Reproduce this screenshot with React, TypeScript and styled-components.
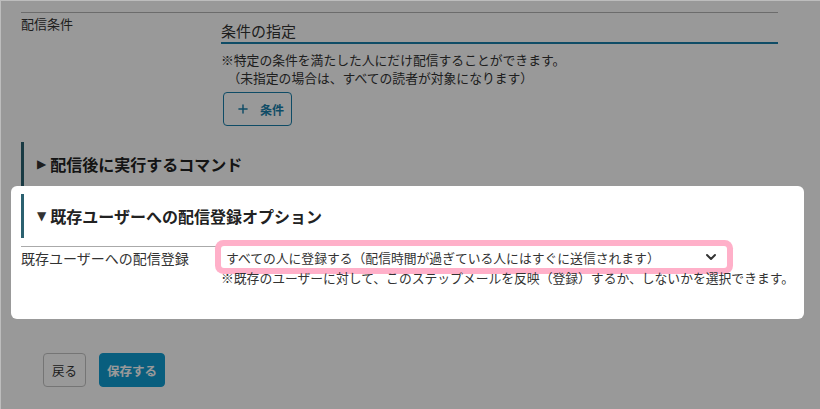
import React from 'react';
import styled, { createGlobalStyle } from 'styled-components';
import { ChevronDown, Plus } from 'lucide-react';

const GlobalStyle = createGlobalStyle`
  body {
    margin: 0;
    background: #ffffff;
    font-family: 'Noto Sans CJK JP', 'Noto Sans', sans-serif;
    color: #333333;
  }
`;

const Overlay = styled.div`
  position: fixed;
  inset: 0;
  background: rgba(0, 0, 0, 0.4);
  border-top: 1px solid rgba(255, 255, 255, 0.35);
  border-left: 1px solid rgba(255, 255, 255, 0.35);
  z-index: 1;
`;

const Page = styled.div`
  width: 820px;
  height: 409px;
  box-sizing: border-box;
  padding: 12px 42px 0 21px;
  overflow: hidden;
`;

const FormRow = styled.div<{ labelLine?: boolean }>`
  display: grid;
  grid-template-columns: 197px 1fr;
  column-gap: 3px;
  border-top: ${({ labelLine }) => (labelLine ? 'none' : '1px solid #b4b4b4')};
  margin-top: ${({ labelLine }) => (labelLine ? '8px' : '0')};
`;

const Label = styled.div<{ lined?: boolean }>`
  font-size: ${({ lined }) => (lined ? '14px' : '13px')};
  line-height: 18px;
  padding-top: 2px;
  border-top: ${({ lined }) => (lined ? '1px solid #aaaaaa' : 'none')};
`;

const Value = styled.div`
  padding-top: 8px;
  min-width: 0;
`;

const CondTitle = styled.div`
  font-size: 15px;
  line-height: 20px;
  padding-bottom: 1px;
  border-bottom: 2px solid #1a7fab;
  color: #333333;
`;

const Note = styled.div`
  font-size: 12.8px;
  line-height: 18px;
  white-space: nowrap;
`;

const NoteBlock = styled.div`
  margin-top: 7px;
`;

const AddButton = styled.button`
  display: flex;
  align-items: center;
  gap: 10px;
  margin: 5px 0 0 2px;
  width: 69px;
  height: 34px;
  padding: 0 0 0 12px;
  box-sizing: border-box;
  border: 1px solid #1a7fab;
  border-radius: 4px;
  background: #ffffff;
  color: #1a7fab;
  font-family: inherit;
  font-size: 12px;
  font-weight: 700;
`;

const SectionHeader = styled.div<{ gapTop: number }>`
  display: flex;
  align-items: center;
  gap: 4px;
  height: 44px;
  margin-top: ${({ gapTop }) => gapTop}px;
  padding-left: 13px;
  border-left: 3px solid #2b6170;
  font-size: 16px;
  font-weight: 700;
  color: #222222;
`;

const Arrow = styled.span`
  font-family: 'DejaVu Sans', sans-serif;
  font-size: 12px;
  color: #333333;
`;

const Highlight = styled.div`
  position: relative;
  z-index: 2;
  background: #ffffff;
  border-radius: 6px;
  margin: 0 -26px 0 -10px;
  padding: 8px 26px 32px 10px;
`;

const SelectWrap = styled.div`
  padding-top: 0;
`;

const Select = styled.div`
  display: flex;
  align-items: center;
  justify-content: space-between;
  height: 22px;
  margin-right: 67px;
  padding: 0 8px 0 5px;
  border-radius: 3px;
  background: #ffffff;
  box-shadow: 0 0 0 6px #ffb0c9;
  font-size: 12.8px;
  color: #333333;
`;

const SubNote = styled(Note)`
  margin-top: 1px;
`;

const Footer = styled.div`
  display: flex;
  gap: 13px;
  margin: 34px 0 0 22px;
`;

const Button = styled.button<{ primary?: boolean }>`
  height: 34px;
  padding: 0 ${({ primary }) => (primary ? '7px' : '8px')};
  border-radius: 4px;
  border: 1px solid ${({ primary }) => (primary ? '#109dd3' : '#c4c4c4')};
  background: ${({ primary }) => (primary ? '#109dd3' : '#ffffff')};
  color: ${({ primary }) => (primary ? '#ffffff' : '#333333')};
  font-family: inherit;
  font-size: 12.5px;
  font-weight: ${({ primary }) => (primary ? 700 : 400)};
`;

export default function App() {
  return (
    <>
      <GlobalStyle />
      <Overlay />
      <Page>
        <FormRow>
          <Label>配信条件</Label>
          <Value>
            <CondTitle>条件の指定</CondTitle>
            <NoteBlock>
              <Note>※特定の条件を満たした人にだけ配信することができます。</Note>
              <Note>　（未指定の場合は、すべての読者が対象になります）</Note>
            </NoteBlock>
            <AddButton>
              <Plus size={14} strokeWidth={2.5} />
              条件
            </AddButton>
          </Value>
        </FormRow>

        <SectionHeader gapTop={16}>
          <Arrow>▶</Arrow>
          配信後に実行するコマンド
        </SectionHeader>

        <Highlight>
          <SectionHeader gapTop={0}>
            <Arrow>▼</Arrow>
            既存ユーザーへの配信登録オプション
          </SectionHeader>
          <FormRow labelLine>
            <Label lined>既存ユーザーへの配信登録</Label>
            <SelectWrap>
              <Select>
                すべての人に登録する（配信時間が過ぎている人にはすぐに送信されます）
                <ChevronDown size={16} strokeWidth={3} color="#333333" />
              </Select>
              <SubNote>※既存のユーザーに対して、このステップメールを反映（登録）するか、しないかを選択できます。</SubNote>
            </SelectWrap>
          </FormRow>
        </Highlight>

        <Footer>
          <Button>戻る</Button>
          <Button primary>保存する</Button>
        </Footer>
      </Page>
    </>
  );
}
